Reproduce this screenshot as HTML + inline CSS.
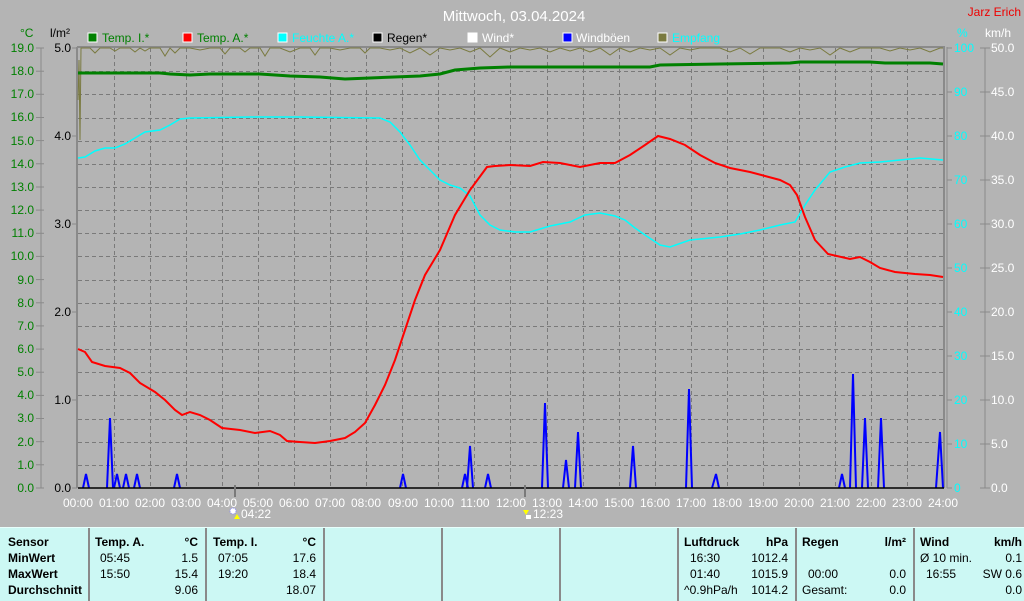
<!DOCTYPE html>
<html><head><meta charset="utf-8"><style>
html,body{margin:0;padding:0;background:#b4b4b4;}
body{width:1024px;height:600px;overflow:hidden;position:relative;font-family:"Liberation Sans",sans-serif;}
svg text{font-family:"Liberation Sans",sans-serif;font-size:12px;}
.tbl{position:absolute;left:0;top:527px;width:1024px;height:73px;background:#ccf8f4;border-top:1px solid #e8fffc;}
.col{position:absolute;top:0;height:73px;border-left:2px solid #8a8a8a;}
.t{position:absolute;font-size:12px;color:#000;white-space:nowrap;}
.b{font-weight:bold;}
.r{text-align:right;}
</style></head><body>
<svg width="1024" height="528" style="position:absolute;left:0;top:0">
<text x="514" y="21" fill="#fff" text-anchor="middle" style="font-size:15px">Mittwoch, 03.04.2024</text>
<text x="1021" y="16" fill="#e00" text-anchor="end">Jarz Erich</text>
<!-- legend -->
<rect x="88" y="33" width="9" height="9" fill="#008000" stroke="#fff"/><text x="102" y="42" fill="#008000">Temp. I.*</text>
<rect x="183" y="33" width="9" height="9" fill="#f00" stroke="#fff"/><text x="197" y="42" fill="#008000">Temp. A.*</text>
<rect x="278" y="33" width="9" height="9" fill="#0ff" stroke="#fff"/><text x="292" y="42" fill="#0ff">Feuchte A.*</text>
<rect x="373" y="33" width="9" height="9" fill="#000" stroke="#fff"/><text x="387" y="42" fill="#000">Regen*</text>
<rect x="468" y="33" width="9" height="9" fill="#fff" stroke="#fff"/><text x="482" y="42" fill="#fff">Wind*</text>
<rect x="563" y="33" width="9" height="9" fill="#00f" stroke="#fff"/><text x="576" y="42" fill="#fff">Windböen</text>
<rect x="658" y="33" width="9" height="9" fill="#7a7a40" stroke="#fff"/><text x="672" y="42" fill="#0ff">Empfang</text>
<text x="20" y="37" fill="#008000">°C</text><text x="50" y="37" fill="#000">l/m²</text>
<text x="957" y="37" fill="#0ff">%</text><text x="985" y="37" fill="#fff">km/h</text>
<!-- grid -->
<path fill="none" stroke="#7a7a7a" stroke-dasharray="4,3" d="M114.5 48V488M150.5 48V488M186.5 48V488M222.5 48V488M258.5 48V488M294.5 48V488M330.5 48V488M366.5 48V488M402.5 48V488M438.5 48V488M474.5 48V488M510.5 48V488M547.5 48V488M583.5 48V488M619.5 48V488M655.5 48V488M691.5 48V488M727.5 48V488M763.5 48V488M799.5 48V488M835.5 48V488M871.5 48V488M907.5 48V488
M78 71.5H944M78 94.5H944M78 118.5H944M78 141.5H944M78 164.5H944M78 187.5H944M78 210.5H944M78 233.5H944M78 256.5H944M78 280.5H944M78 303.5H944M78 326.5H944M78 349.5H944M78 372.5H944M78 395.5H944M78 419.5H944M78 442.5H944M78 465.5H944"/>
<line x1="77" y1="47" x2="945" y2="47" stroke="#8a8a8a" stroke-width="2"/>
<line x1="77" y1="47" x2="77" y2="488" stroke="#8a8a8a" stroke-width="2"/>
<line x1="944" y1="47" x2="944" y2="488" stroke="#8a8a8a" stroke-width="2"/>
<line x1="947" y1="47" x2="947" y2="488" stroke="#8a8a8a" stroke-width="1"/>
<line x1="41" y1="48" x2="41" y2="488" stroke="#8a8a8a"/>
<line x1="985" y1="48" x2="985" y2="488" stroke="#8a8a8a"/>
<g stroke="#8a8a8a">
<line x1="36" y1="48" x2="44" y2="48"/><line x1="36" y1="71.2" x2="44" y2="71.2"/><line x1="36" y1="94.3" x2="44" y2="94.3"/><line x1="36" y1="117.5" x2="44" y2="117.5"/><line x1="36" y1="140.6" x2="44" y2="140.6"/><line x1="36" y1="163.8" x2="44" y2="163.8"/><line x1="36" y1="187" x2="44" y2="187"/><line x1="36" y1="210.1" x2="44" y2="210.1"/><line x1="36" y1="233.3" x2="44" y2="233.3"/><line x1="36" y1="256.4" x2="44" y2="256.4"/><line x1="36" y1="279.6" x2="44" y2="279.6"/><line x1="36" y1="302.8" x2="44" y2="302.8"/><line x1="36" y1="325.9" x2="44" y2="325.9"/><line x1="36" y1="349.1" x2="44" y2="349.1"/><line x1="36" y1="372.2" x2="44" y2="372.2"/><line x1="36" y1="395.4" x2="44" y2="395.4"/><line x1="36" y1="418.5" x2="44" y2="418.5"/><line x1="36" y1="441.7" x2="44" y2="441.7"/><line x1="36" y1="464.8" x2="44" y2="464.8"/><line x1="36" y1="488" x2="44" y2="488"/>
<line x1="72" y1="48" x2="77" y2="48"/><line x1="72" y1="136" x2="77" y2="136"/><line x1="72" y1="224" x2="77" y2="224"/><line x1="72" y1="312" x2="77" y2="312"/><line x1="72" y1="400" x2="77" y2="400"/><line x1="72" y1="488" x2="77" y2="488"/>
<line x1="947" y1="48" x2="952" y2="48"/><line x1="947" y1="92" x2="952" y2="92"/><line x1="947" y1="136" x2="952" y2="136"/><line x1="947" y1="180" x2="952" y2="180"/><line x1="947" y1="224" x2="952" y2="224"/><line x1="947" y1="268" x2="952" y2="268"/><line x1="947" y1="312" x2="952" y2="312"/><line x1="947" y1="356" x2="952" y2="356"/><line x1="947" y1="400" x2="952" y2="400"/><line x1="947" y1="444" x2="952" y2="444"/><line x1="947" y1="488" x2="952" y2="488"/>
<line x1="980" y1="48" x2="990" y2="48"/><line x1="980" y1="92" x2="990" y2="92"/><line x1="980" y1="136" x2="990" y2="136"/><line x1="980" y1="180" x2="990" y2="180"/><line x1="980" y1="224" x2="990" y2="224"/><line x1="980" y1="268" x2="990" y2="268"/><line x1="980" y1="312" x2="990" y2="312"/><line x1="980" y1="356" x2="990" y2="356"/><line x1="980" y1="400" x2="990" y2="400"/><line x1="980" y1="444" x2="990" y2="444"/><line x1="980" y1="488" x2="990" y2="488"/>
</g>
<g fill="#008000" text-anchor="end">
<text x="34" y="52">19.0</text><text x="34" y="75">18.0</text><text x="34" y="98">17.0</text><text x="34" y="121">16.0</text><text x="34" y="145">15.0</text><text x="34" y="168">14.0</text><text x="34" y="191">13.0</text><text x="34" y="214">12.0</text><text x="34" y="237">11.0</text><text x="34" y="260">10.0</text><text x="34" y="284">9.0</text><text x="34" y="307">8.0</text><text x="34" y="330">7.0</text><text x="34" y="353">6.0</text><text x="34" y="376">5.0</text><text x="34" y="399">4.0</text><text x="34" y="422">3.0</text><text x="34" y="446">2.0</text><text x="34" y="469">1.0</text><text x="34" y="492">0.0</text>
</g>
<g fill="#000" text-anchor="end">
<text x="71" y="52">5.0</text><text x="71" y="140">4.0</text><text x="71" y="228">3.0</text><text x="71" y="316">2.0</text><text x="71" y="404">1.0</text><text x="71" y="492">0.0</text>
</g>
<g fill="#0ff">
<text x="954" y="52">100</text><text x="954" y="96">90</text><text x="954" y="140">80</text><text x="954" y="184">70</text><text x="954" y="228">60</text><text x="954" y="272">50</text><text x="954" y="316">40</text><text x="954" y="360">30</text><text x="954" y="404">20</text><text x="954" y="448">10</text><text x="954" y="492">0</text>
</g>
<g fill="#fff">
<text x="991" y="52">50.0</text><text x="991" y="96">45.0</text><text x="991" y="140">40.0</text><text x="991" y="184">35.0</text><text x="991" y="228">30.0</text><text x="991" y="272">25.0</text><text x="991" y="316">20.0</text><text x="991" y="360">15.0</text><text x="991" y="404">10.0</text><text x="991" y="448">5.0</text><text x="991" y="492">0.0</text>
</g>
<!-- empfang -->
<polyline fill="none" stroke="#7a7a40" points="78,100 79,60 80,140 81,48 83,48 90,48 95,53 100,48 110,48 115,51 120,48 130,48 135,52 140,48 145,51 150,48 160,48 165,56 170,48 175,53 180,48 190,48 200,50 210,48 220,48 225,54 230,48 240,48 245,52 250,48 260,48 265,56 270,48 280,48 290,52 300,48 310,48 315,55 320,48 330,48 340,50 350,48 360,48 365,53 370,48 380,48 390,50 400,48 410,53 420,48 430,55 440,48 450,50 460,48 470,52 480,48 490,57 500,48 510,52 520,48 530,50 540,48 550,52 560,48 570,51 580,48 590,52 600,48 610,55 620,48 630,52 640,48 650,50 660,48 670,55 680,48 690,50 700,48 720,48 730,52 740,48 750,54 760,48 780,48 790,52 800,48 810,50 820,48 830,55 840,48 850,52 860,48 880,48 890,51 900,48 910,50 920,48 930,52 940,48 943,48"/>
<polyline fill="none" stroke="#008000" stroke-width="3" points="78,73 160,73 170,74 190,75 210,74 260,74 290,76 320,77 345,79 370,78 420,76 440,74 455,70 480,68 510,67 650,67 660,65 720,64 790,63 800,62 870,62 885,63 930,63 943,64"/>
<polyline fill="none" stroke="#0ff" stroke-width="1.5" points="78,158 85,157 95,151 105,148 115,148 125,144 135,138 145,132 160,130 170,125 180,119 190,118 250,117 300,117 380,118 390,122 400,132 410,145 420,160 430,170 440,180 450,185 460,188 470,196 480,215 490,225 500,230 515,232 530,232 550,226 570,222 585,215 600,213 615,216 625,220 635,228 645,235 660,245 670,247 690,240 720,237 740,234 760,230 780,225 795,222 805,205 815,190 830,172 845,167 860,163 880,162 900,160 920,158 943,160"/>
<polyline fill="none" stroke="#f00" stroke-width="2" points="78,349 85,352 92,362 105,366 120,368 130,373 140,383 155,392 165,400 175,410 182,415 190,412 200,415 210,420 222,428 240,430 255,433 270,431 280,435 287,441 300,442 315,443 330,441 345,438 355,432 365,423 375,405 385,385 395,360 405,330 415,300 425,275 440,250 455,215 470,190 487,167 495,166 510,165 530,166 543,162 560,163 580,167 600,163 615,163 630,155 645,145 658,136 670,139 685,145 700,155 715,163 730,168 750,172 765,176 780,180 790,185 797,195 805,217 815,240 828,254 850,259 860,257 870,262 880,268 895,272 915,274 930,275 943,277"/>
<g fill="none" stroke="#00f" stroke-width="2">
<polyline points="83,488 86,474 89,488"/>
<polyline points="107,488 110,418 113,488"/>
<polyline points="114,488 117,474 120,488"/>
<polyline points="123,488 126,474 129,488"/>
<polyline points="134,488 137,474 140,488"/>
<polyline points="174,488 177,474 180,488"/>
<polyline points="400,488 403,474 406,488"/>
<polyline points="462,488 465,474 468,488"/>
<polyline points="467,488 470,446 473,488"/>
<polyline points="485,488 488,474 491,488"/>
<polyline points="542,488 545,403 548,488"/>
<polyline points="563,488 566,460 569,488"/>
<polyline points="575,488 578,432 581,488"/>
<polyline points="630,488 633,446 636,488"/>
<polyline points="686,488 689,389 692,488"/>
<polyline points="712,488 716,474 719,488"/>
<polyline points="839,488 842,474 845,488"/>
<polyline points="850,488 853,374 856,488"/>
<polyline points="862,488 865,418 868,488"/>
<polyline points="878,488 881,418 884,488"/>
<polyline points="936,488 940,432 943,488"/>
</g>
<line x1="78" y1="488" x2="944" y2="488" stroke="#000" stroke-width="1.5"/>
<line x1="235" y1="485" x2="235" y2="497" stroke="#7a7a7a" stroke-width="2"/>
<line x1="525" y1="485" x2="525" y2="497" stroke="#7a7a7a" stroke-width="2"/>
<g fill="#fff" text-anchor="middle">
<text x="78" y="507">00:00</text><text x="114" y="507">01:00</text><text x="150" y="507">02:00</text><text x="186" y="507">03:00</text><text x="222" y="507">04:00</text><text x="258" y="507">05:00</text><text x="294" y="507">06:00</text><text x="330" y="507">07:00</text><text x="366" y="507">08:00</text><text x="403" y="507">09:00</text><text x="439" y="507">10:00</text><text x="475" y="507">11:00</text><text x="511" y="507">12:00</text><text x="547" y="507">13:00</text><text x="583" y="507">14:00</text><text x="619" y="507">15:00</text><text x="655" y="507">16:00</text><text x="691" y="507">17:00</text><text x="727" y="507">18:00</text><text x="763" y="507">19:00</text><text x="799" y="507">20:00</text><text x="835" y="507">21:00</text><text x="871" y="507">22:00</text><text x="907" y="507">23:00</text><text x="943" y="507">24:00</text>
</g>
<circle cx="233" cy="511" r="3" fill="#fff" stroke="#88f" stroke-dasharray="1,1"/>
<polygon points="237,514 240,519 234,519" fill="#ff0"/>
<text x="241" y="518" fill="#fff">04:22</text>
<polygon points="523,510 529,510 526,515" fill="#ff0"/>
<rect x="526" y="515" width="5" height="4" fill="#fff"/>
<text x="533" y="518" fill="#fff">12:23</text>
</svg>
<div class="tbl">
<div class="col" style="left:88px"></div><div class="col" style="left:205px"></div><div class="col" style="left:323px"></div><div class="col" style="left:441px"></div><div class="col" style="left:559px"></div><div class="col" style="left:677px"></div><div class="col" style="left:795px"></div><div class="col" style="left:913px"></div>
<div class="t b" style="left:8px;top:7px">Sensor</div>
<div class="t b" style="left:8px;top:23px">MinWert</div>
<div class="t b" style="left:8px;top:39px">MaxWert</div>
<div class="t b" style="left:8px;top:55px">Durchschnitt</div>
<div class="t b" style="left:95px;top:7px">Temp. A.</div><div class="t b r" style="left:150px;width:48px;top:7px">°C</div>
<div class="t" style="left:100px;top:23px">05:45</div><div class="t r" style="left:150px;width:48px;top:23px">1.5</div>
<div class="t" style="left:100px;top:39px">15:50</div><div class="t r" style="left:150px;width:48px;top:39px">15.4</div>
<div class="t r" style="left:150px;width:48px;top:55px">9.06</div>
<div class="t b" style="left:213px;top:7px">Temp. I.</div><div class="t b r" style="left:268px;width:48px;top:7px">°C</div>
<div class="t" style="left:218px;top:23px">07:05</div><div class="t r" style="left:268px;width:48px;top:23px">17.6</div>
<div class="t" style="left:218px;top:39px">19:20</div><div class="t r" style="left:268px;width:48px;top:39px">18.4</div>
<div class="t r" style="left:268px;width:48px;top:55px">18.07</div>
<div class="t b" style="left:684px;top:7px">Luftdruck</div><div class="t b r" style="left:740px;width:48px;top:7px">hPa</div>
<div class="t" style="left:690px;top:23px">16:30</div><div class="t r" style="left:740px;width:48px;top:23px">1012.4</div>
<div class="t" style="left:690px;top:39px">01:40</div><div class="t r" style="left:740px;width:48px;top:39px">1015.9</div>
<div class="t" style="left:684px;top:55px">^0.9hPa/h</div><div class="t r" style="left:740px;width:48px;top:55px">1014.2</div>
<div class="t b" style="left:802px;top:7px">Regen</div><div class="t b r" style="left:858px;width:48px;top:7px">l/m²</div>
<div class="t" style="left:808px;top:39px">00:00</div><div class="t r" style="left:858px;width:48px;top:39px">0.0</div>
<div class="t" style="left:802px;top:55px">Gesamt:</div><div class="t r" style="left:858px;width:48px;top:55px">0.0</div>
<div class="t b" style="left:920px;top:7px">Wind</div><div class="t b r" style="left:960px;width:62px;top:7px">km/h</div>
<div class="t" style="left:920px;top:23px">Ø 10 min.</div><div class="t r" style="left:960px;width:62px;top:23px">0.1</div>
<div class="t" style="left:926px;top:39px">16:55</div><div class="t r" style="left:960px;width:62px;top:39px">SW 0.6</div>
<div class="t r" style="left:960px;width:62px;top:55px">0.0</div>
</div>
</body></html>
